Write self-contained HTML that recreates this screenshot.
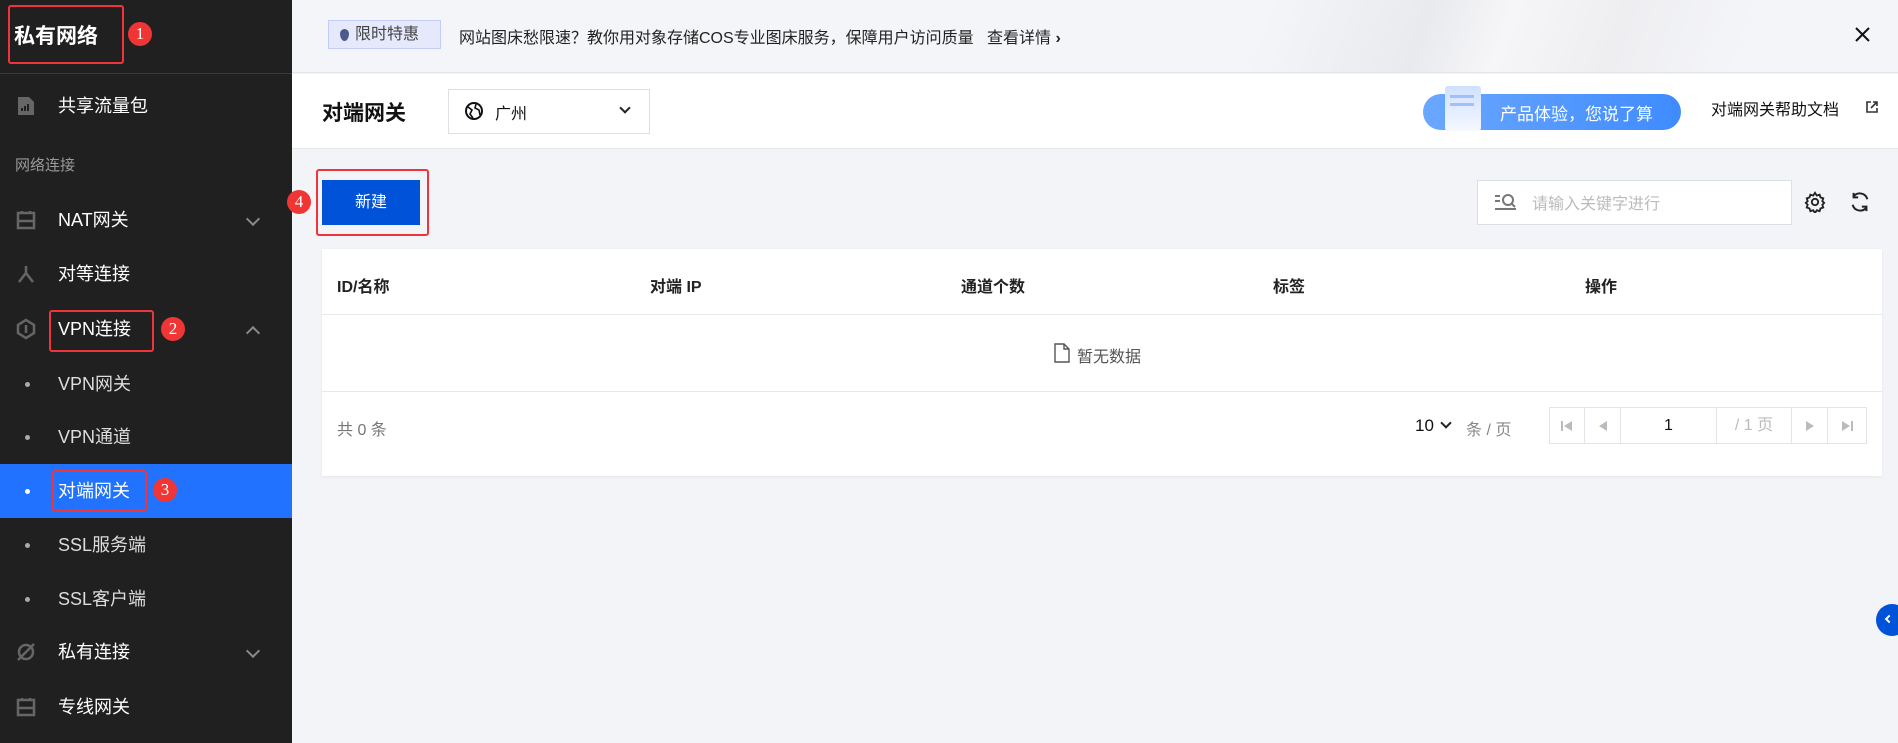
<!DOCTYPE html>
<html><head><meta charset="utf-8"><style>
*{margin:0;padding:0;box-sizing:border-box}
body{width:1898px;height:743px;overflow:hidden;background:#f3f4f7;font-family:"Liberation Sans","Noto Sans CJK SC",sans-serif;position:relative}
.a{position:absolute}
#side{left:0;top:0;width:292px;height:743px;background:#202020}
.it{position:absolute;left:0;width:292px;color:#fff;font-size:18px;line-height:20px}
.it .t{position:absolute;left:58px;top:-10px;white-space:nowrap}
.dot{position:absolute;left:25px;top:-2px;width:5px;height:5px;border-radius:50%;background:#aaa}
.ic{position:absolute;left:15px;top:-11px;width:22px;height:22px}
.chev{position:absolute;left:248px;top:-6px;width:10px;height:10px;border-right:2px solid #888;border-bottom:2px solid #888;transform:rotate(45deg)}
.chev.up{transform:rotate(-135deg);top:-1px}
.badge{position:absolute;width:24px;height:24px;border-radius:50%;background:#f03535;color:#fff;font-family:"Liberation Serif",serif;font-size:17px;text-align:center;line-height:24px}
.rbox{position:absolute;border:2px solid #f0343c;border-radius:3px}
.th{position:absolute;top:24px;font-weight:bold;font-size:16px;color:#222}
.pg{position:absolute;top:0;height:37px;border:1px solid #e3e5ea;color:#bbb;font-size:14px;text-align:center;line-height:35px}
.pg svg{margin-top:12px}
</style></head><body>
<div id="side" class="a">
 <div class="a" style="left:14px;top:20px;color:#fff;font-weight:bold;font-size:21px">私有网络</div>
 <div class="rbox" style="left:8px;top:5px;width:116px;height:59px"></div>
 <div class="badge" style="left:128px;top:22px">1</div>
 <div class="a" style="left:0;top:73px;width:292px;height:1px;background:#3a3a3a"></div>
 <div class="it" style="top:106px"><svg class="ic" viewBox="0 0 22 22"><path d="M3 2h11l5 5v13H3z" fill="#666"/><path d="M7 16v-3M10 16v-5M13 16v-7" stroke="#202020" stroke-width="2"/></svg><span class="t">共享流量包</span></div>
 <div class="it" style="top:166px;color:#999;font-size:15px"><span class="t" style="left:15px">网络连接</span></div>
 <div class="it" style="top:220px"><svg class="ic" viewBox="0 0 22 22"><rect x="3" y="4" width="16" height="15" fill="none" stroke="#666" stroke-width="2.5"/><path d="M3 12h16M7 2v3M15 2v3" stroke="#666" stroke-width="2.5"/></svg><span class="t">NAT网关</span><div class="chev"></div></div>
 <div class="it" style="top:274px"><svg class="ic" viewBox="0 0 22 22"><path d="M11 3v7L4 19M11 10l7 9" stroke="#666" stroke-width="2.5" fill="none"/></svg><span class="t">对等连接</span></div>
 <div class="it" style="top:329px"><svg class="ic" viewBox="0 0 22 22"><path d="M11 2l8 5v8l-8 5-8-5V7z" fill="none" stroke="#666" stroke-width="2.5"/><path d="M11 7v8" stroke="#666" stroke-width="2.5"/></svg><span class="t">VPN连接</span><div class="chev up"></div></div>
 <div class="rbox" style="left:49px;top:310px;width:105px;height:42px"></div>
 <div class="badge" style="left:161px;top:317px">2</div>
 <div class="it" style="top:384px"><div class="dot"></div><span class="t" style="color:#ddd">VPN网关</span></div>
 <div class="it" style="top:437px"><div class="dot"></div><span class="t" style="color:#ddd">VPN通道</span></div>
 <div class="a" style="left:0;top:464px;width:292px;height:54px;background:#2173ff"></div>
 <div class="it" style="top:491px"><div class="dot" style="background:#fff"></div><span class="t">对端网关</span></div>
 <div class="rbox" style="left:52px;top:470px;width:95px;height:42px"></div>
 <div class="badge" style="left:153px;top:478px">3</div>
 <div class="it" style="top:545px"><div class="dot"></div><span class="t" style="color:#ddd">SSL服务端</span></div>
 <div class="it" style="top:599px"><div class="dot"></div><span class="t" style="color:#ddd">SSL客户端</span></div>
 <div class="it" style="top:652px"><svg class="ic" viewBox="0 0 22 22"><circle cx="11" cy="11" r="7" fill="none" stroke="#666" stroke-width="2.5"/><path d="M3 19L19 3" stroke="#666" stroke-width="2.5"/></svg><span class="t">私有连接</span><div class="chev"></div></div>
 <div class="it" style="top:707px"><svg class="ic" viewBox="0 0 22 22"><rect x="3" y="4" width="16" height="15" fill="none" stroke="#666" stroke-width="2.5"/><path d="M3 12h16M7 2v3M15 2v3" stroke="#666" stroke-width="2.5"/></svg><span class="t">专线网关</span></div>
</div>

<div class="a" style="left:292px;top:0;width:1606px;height:73px;background:linear-gradient(110deg,#f4f5f8 60%,#e9eaee 70%,#f6f6f8 75%,#eeeef1 82%,#f4f5f8 90%);border-bottom:1px solid #e3e5ea"></div>
<div class="a" style="left:328px;top:20px;width:113px;height:29px;background:#e5e9fb;border:1px solid #c3cdf5;font-size:16px;color:#444;line-height:27px;padding-left:26px">限时特惠</div>
<div class="a" style="left:340px;top:29px;width:9px;height:12px;border-radius:50%/40% 40% 60% 60%;background:#4a5b8a"></div>
<div class="a" style="left:459px;top:24px;font-size:16px;color:#222;white-space:nowrap">网站图床愁限速？教你用对象存储COS专业图床服务，保障用户访问质量 &nbsp;&nbsp;查看详情 <b>›</b></div>
<svg class="a" style="left:1855px;top:27px" width="15" height="15" viewBox="0 0 15 15"><path d="M1 1l13 13M14 1L1 14" stroke="#111" stroke-width="2"/></svg>

<div class="a" style="left:292px;top:74px;width:1606px;height:75px;background:#fff;border-bottom:1px solid #e3e5ea"></div>
<div class="a" style="left:322px;top:97px;font-size:21px;font-weight:bold;color:#111">对端网关</div>
<div class="a" style="left:448px;top:89px;width:202px;height:45px;border:1px solid #dcdfe6;background:#fff"></div>
<svg class="a" style="left:464px;top:101px" width="20" height="20" viewBox="0 0 20 20"><circle cx="10" cy="10" r="8" fill="none" stroke="#111" stroke-width="2"/><path d="M4 6l4 3-2 4 3 4M12 3l-1 4 4 2 1 5" fill="none" stroke="#111" stroke-width="1.6"/></svg>
<div class="a" style="left:495px;top:100px;font-size:16px;color:#111">广州</div>
<div class="a" style="left:621px;top:104px;width:8px;height:8px;border-right:2px solid #222;border-bottom:2px solid #222;transform:rotate(45deg)"></div>
<div class="a" style="left:1423px;top:94px;width:258px;height:36px;border-radius:18px;background:linear-gradient(90deg,#6aa7ff,#3f8bff)"></div>
<div class="a" style="left:1445px;top:86px;width:36px;height:45px;background:linear-gradient(#cfe0ff,#f5f8ff);border-radius:3px"></div>
<div class="a" style="left:1450px;top:95px;width:24px;height:3px;background:#9fc0f8;box-shadow:0 8px 0 #9fc0f8"></div>
<div class="a" style="left:1500px;top:100px;font-size:17px;color:#fff">产品体验，您说了算</div>
<div class="a" style="left:1711px;top:96px;font-size:16px;color:#111">对端网关帮助文档</div>
<svg class="a" style="left:1865px;top:100px" width="14" height="14" viewBox="0 0 14 14"><path d="M6 2H2v10h10V8M8 2h4v4M12 2L6 8" fill="none" stroke="#333" stroke-width="1.6"/></svg>

<div class="a" style="left:322px;top:180px;width:98px;height:45px;background:#0052d9;color:#fff;font-size:16px;text-align:center;line-height:45px">新建</div>
<div class="rbox" style="left:316px;top:169px;width:113px;height:67px"></div>
<div class="badge" style="left:287px;top:190px">4</div>
<div class="a" style="left:1477px;top:180px;width:315px;height:45px;background:#fff;border:1px solid #dcdfe6;overflow:hidden"></div>
<svg class="a" style="left:1494px;top:192px" width="24" height="20" viewBox="0 0 24 20"><path d="M1 4h5M1 9h5M1 17h21" stroke="#777" stroke-width="2"/><circle cx="14" cy="8" r="5" fill="none" stroke="#777" stroke-width="2"/><path d="M18 12l3 3" stroke="#777" stroke-width="2"/></svg>
<div class="a" style="left:1532px;top:190px;font-size:16px;color:#bbb">请输入关键字进行</div>
<svg class="a" style="left:1804px;top:191px" width="22" height="22" viewBox="0 0 24 24"><path d="M12 2l2 3 3-1 1 3 3 1-1 3 2 2-2 2 1 3-3 1-1 3-3-1-2 3-2-3-3 1-1-3-3-1 1-3-2-2 2-2-1-3 3-1 1-3 3 1z" fill="none" stroke="#222" stroke-width="2"/><circle cx="12" cy="12" r="3.5" fill="none" stroke="#222" stroke-width="2"/></svg>
<svg class="a" style="left:1849px;top:191px" width="22" height="22" viewBox="0 0 24 24"><path d="M20 9A8.5 8.5 0 0 0 5 6M4 15a8.5 8.5 0 0 0 15 3" fill="none" stroke="#222" stroke-width="2.2"/><path d="M5 2v5h5M19 22v-5h-5" fill="none" stroke="#222" stroke-width="2.2"/></svg>

<div class="a" style="left:322px;top:249px;width:1560px;height:227px;background:#fff;box-shadow:0 1px 3px rgba(0,0,0,.06)">
 <div class="th" style="left:15px">ID/名称</div>
 <div class="th" style="left:328px">对端 IP</div>
 <div class="th" style="left:639px">通道个数</div>
 <div class="th" style="left:951px">标签</div>
 <div class="th" style="left:1263px">操作</div>
 <div class="a" style="left:0;top:65px;width:1560px;height:1px;background:#e6e8ed"></div>
 <div class="a" style="left:0;top:142px;width:1560px;height:1px;background:#e6e8ed"></div>
 <svg class="a" style="left:732px;top:94px" width="16" height="20" viewBox="0 0 16 20"><path d="M1 1h9l5 5v13H1z M10 1v5h5" fill="none" stroke="#555" stroke-width="1.4"/></svg>
 <div class="a" style="left:755px;top:94px;font-size:16px;color:#555">暂无数据</div>
 <div class="a" style="left:15px;top:167px;font-size:16px;color:#777">共 0 条</div>
 <div class="a" style="left:1093px;top:167px;font-size:17px;color:#111">10</div>
 <div class="a" style="left:1120px;top:170px;width:8px;height:8px;border-right:2px solid #222;border-bottom:2px solid #222;transform:rotate(45deg)"></div>
 <div class="a" style="left:1144px;top:167px;font-size:16px;color:#888">条 / 页</div>
 <div class="a" style="left:1227px;top:158px;width:318px;height:37px">
  <div class="pg" style="left:0;width:36px"><svg width="12" height="12" viewBox="0 0 12 12"><path d="M1 1v10" stroke="#bbb" stroke-width="2"/><path d="M11 1v10L3 6z" fill="#bbb"/></svg></div>
  <div class="pg" style="left:35px;width:37px"><svg width="10" height="12" viewBox="0 0 10 12"><path d="M9 1v10L1 6z" fill="#bbb"/></svg></div>
  <div class="pg" style="left:71px;width:97px;color:#111;font-size:16px">1</div>
  <div class="pg" style="left:167px;width:76px;font-size:16px">/ 1 页</div>
  <div class="pg" style="left:242px;width:37px"><svg width="10" height="12" viewBox="0 0 10 12"><path d="M1 1v10L9 6z" fill="#bbb"/></svg></div>
  <div class="pg" style="left:278px;width:40px"><svg width="12" height="12" viewBox="0 0 12 12"><path d="M1 1v10L9 6z" fill="#bbb"/><path d="M11 1v10" stroke="#bbb" stroke-width="2"/></svg></div>
 </div>
</div>
<div class="a" style="left:1876px;top:604px;width:32px;height:32px;border-radius:50%;background:#0052d9"></div>
<div class="a" style="left:1886px;top:616px;width:6px;height:6px;border-left:2px solid #fff;border-bottom:2px solid #fff;transform:rotate(45deg)"></div>
</body></html>
